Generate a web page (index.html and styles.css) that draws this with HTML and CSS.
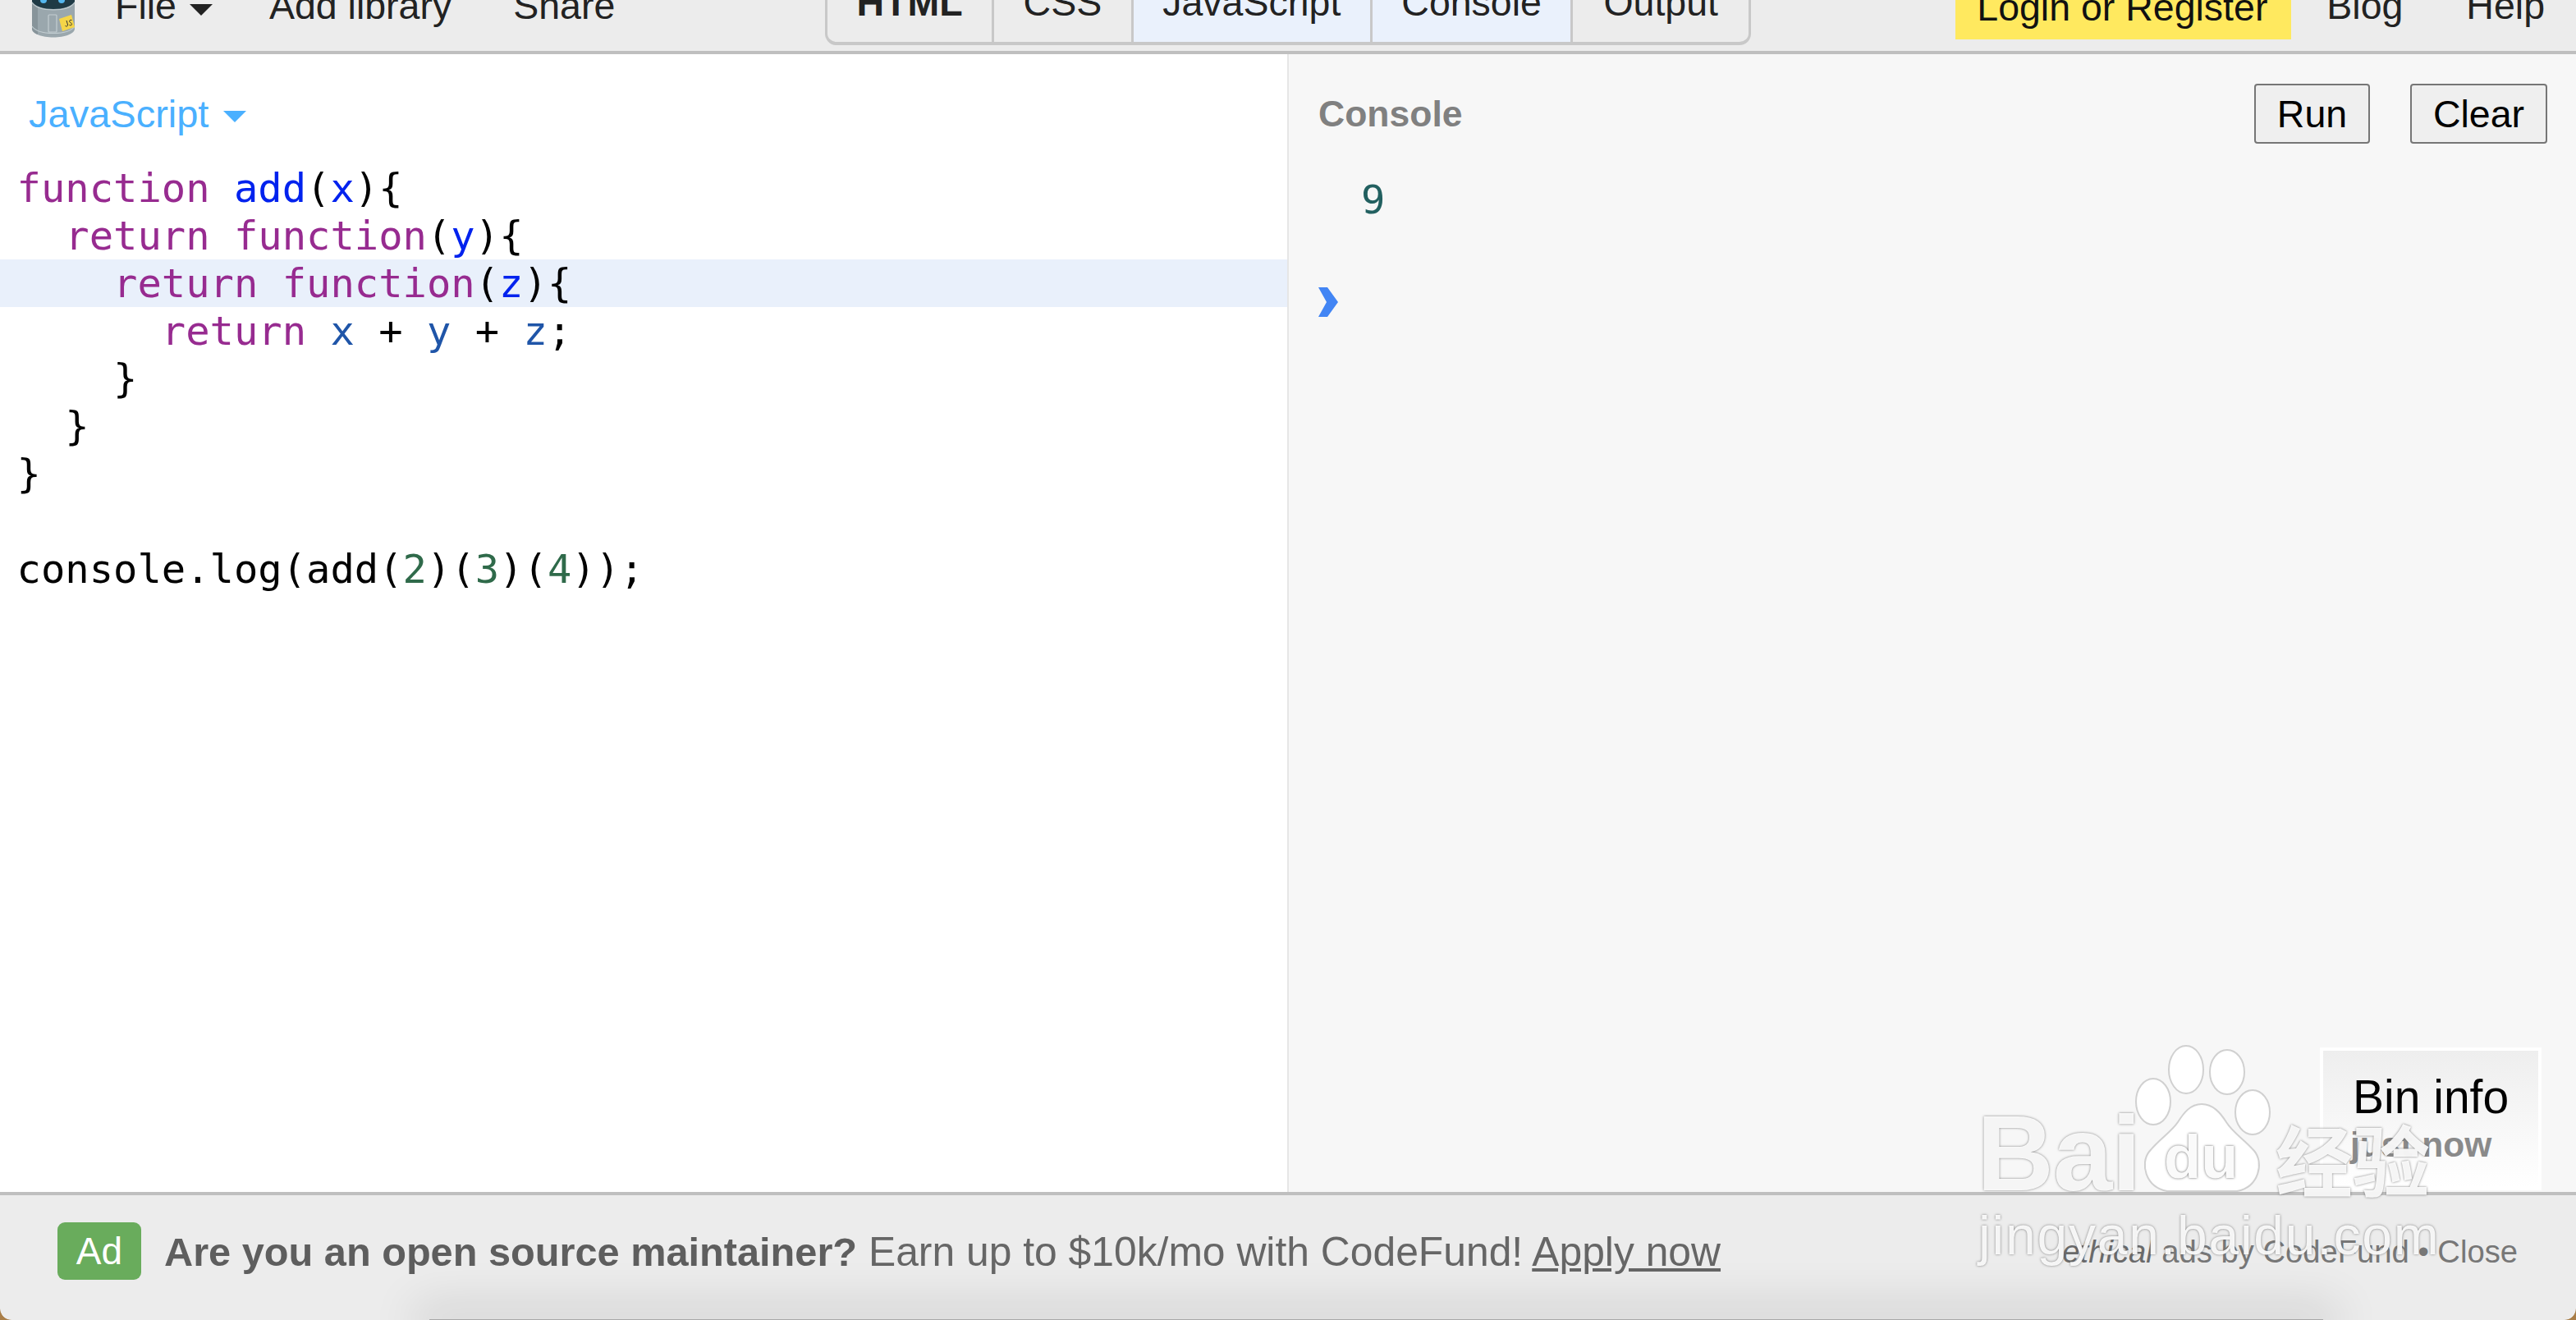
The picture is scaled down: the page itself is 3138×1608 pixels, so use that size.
FILE: index.html
```html
<!DOCTYPE html>
<html lang="en">
<head>
<meta charset="utf-8">
<title>JS Bin</title>
<link rel="stylesheet" href="styles.css">
</head>
<body>
<div class="app">
  <header class="topbar">
    <nav class="nav-left">
      <svg class="logo" viewBox="0 0 54 46" aria-hidden="true">
        <path d="M1 2V35C1 41 13 45.500 27 45.500S53 41 53 35V2Z" fill="#9aa7ad"/>
        <path d="M1 2V35C1 38 4 40.500 8 42V2Z" fill="#87949a"/>
        <path d="M1 32C5 38 15 40.500 27 40.500S49 38 53 32" fill="none" stroke="#c3ced2" stroke-width="1.200"/>
        <path d="M1 2C5 8 15 11 27 11S49 8 53 2V-6H1Z" fill="#1f3a45"/>
        <path d="M1 3C5 9 15 12 27 12S49 9 53 3" fill="none" stroke="#c3ced2" stroke-width="1.200"/>
        <circle cx="15" cy="0" r="4" fill="#55b7ee"/>
        <circle cx="37" cy="0" r="4" fill="#55b7ee"/>
        <rect x="21" y="18" width="10" height="21" rx="1" fill="none" stroke="#c3ced2" stroke-width="1.200"/>
        <path d="M34 23L49 18L53 33L38 38Z" fill="#f5d548"/>
        <path d="M43 25L44.500 30C44.800 32 43 32.500 41.500 31.500M49.500 24.500C47.500 24 46 25 46.800 26.500C47.500 28 49.500 28 49.500 29.500C49.500 31 47.500 31 46.500 30.500" fill="none" stroke="#333" stroke-width="1"/>
      </svg>
      <a class="nav-item nav-file">File<span class="caret"></span></a>
      <a class="nav-item">Add library</a>
      <a class="nav-item">Share</a>
    </nav>
    <div class="tabs">
      <a class="tab tab-html">HTML</a>
      <a class="tab">CSS</a>
      <a class="tab tab-on">JavaScript</a>
      <a class="tab tab-on">Console</a>
      <a class="tab">Output</a>
    </div>
    <nav class="nav-right">
      <a class="nav-item login">Login or Register</a>
      <a class="nav-item">Blog</a>
      <a class="nav-item">Help</a>
    </nav>
  </header>

  <main class="workspace">
    <section class="editor">
      <div class="editor-head">
        <span class="lang">JavaScript<span class="lang-caret"></span></span>
      </div>
      <div class="code">
        <div class="line"><span class="kw">function</span> <span class="def">add</span>(<span class="def">x</span>){</div>
        <div class="line">  <span class="kw">return</span> <span class="kw">function</span>(<span class="def">y</span>){</div>
        <div class="line line-active">    <span class="kw">return</span> <span class="kw">function</span>(<span class="def">z</span>){</div>
        <div class="line">      <span class="kw">return</span> <span class="var">x</span> + <span class="var">y</span> + <span class="var">z</span>;</div>
        <div class="line">    }</div>
        <div class="line">  }</div>
        <div class="line">}</div>
        <div class="line"> </div>
        <div class="line">console.log(add(<span class="num">2</span>)(<span class="num">3</span>)(<span class="num">4</span>));</div>
      </div>
    </section>
    <section class="console">
      <div class="console-head">
        <span class="console-title">Console</span>
        <div class="console-actions">
          <button class="btn btn-run">Run</button>
          <button class="btn btn-clear">Clear</button>
        </div>
      </div>
      <div class="console-output">9</div>
      <svg class="prompt" viewBox="0 0 24 36" aria-hidden="true"><path d="M0 0H11L24 18L11 36H0L10 18Z" fill="#4285f4"/></svg>
    </section>
    <aside class="bin-info">
      <div class="bin-title">Bin info</div>
      <div class="bin-time">just now</div>
    </aside>
  </main>

  <footer class="adbar">
    <span class="ad-badge">Ad</span>
    <p class="ad-text"><strong>Are you an open source maintainer?</strong> Earn up to $10k/mo with CodeFund! <a class="ad-link">Apply now</a></p>
    <p class="ad-credit"><em>ethical</em> ads by CodeFund • Close</p>
    <div class="ad-shadow"></div>
  </footer>

  <div class="watermark">
    <svg class="wm-paw" viewBox="0 0 180 180" aria-hidden="true">
      <g fill="#fff" fill-opacity=".9" stroke="#b4b4b4" stroke-opacity=".6" stroke-width="2">
        <ellipse cx="33" cy="72" rx="21" ry="28"/>
        <ellipse cx="73" cy="33" rx="21" ry="29"/>
        <ellipse cx="123" cy="36" rx="21" ry="27"/>
        <ellipse cx="154" cy="85" rx="21" ry="27"/>
        <path d="M92 75C78 75 70 86 63 97C55 109 41 117 28 133C17 147 23 176 50 181H135C162 176 168 146 156 132C144 118 130 110 122 97C115 86 106 75 92 75Z"/>
      </g>
    </svg>
    <span class="wm-bai">Bai</span>
    <span class="wm-du">du</span>
    <span class="wm-cn">经验</span>
    <span class="wm-url">jingyan.baidu.com</span>
  </div>
</div>
</body>
</html>
```

FILE: styles.css
```css
* { box-sizing: border-box; }
html, body { margin: 0; height: 100%; background: #a97e48; overflow: hidden; }
body { font-family: "Liberation Sans", Arial, sans-serif; color: #222; }
.app { position: relative; height: 1608px; display: flex; flex-direction: column; overflow: hidden; border-radius: 0 0 14px 14px; }

.topbar { height: 66px; flex: none; background: #ececec; border-bottom: 4px solid #bfbfbf; display: grid; grid-template-columns: 1fr auto 1fr; align-items: end; overflow: hidden; font-size: 46.500px; line-height: 52px; }
.nav-left { display: flex; align-items: flex-end; height: 62px; padding-left: 38px; }
.logo { width: 54px; height: 46px; margin-bottom: 16px; flex: none; overflow: visible; }
.nav-item { color: #222; white-space: nowrap; }
.nav-left .nav-item { margin-bottom: 29px; }
.nav-left .nav-file { margin-left: 48px; margin-right: 69px; display: flex; align-items: center; }
.nav-left .nav-item + .nav-item { margin-right: 75px; }
.caret { width: 0; height: 0; border-left: 14px solid transparent; border-right: 14px solid transparent; border-top: 14px solid #222; margin-left: 16px; margin-top: 10px; }

.tabs { display: flex; height: 62px; padding-bottom: 7px; }
.tab { padding: 0 35.500px 22px; display: flex; align-items: flex-end; border-right: 3px solid #c8c8c8; border-bottom: 4px solid #c8c8c8; color: #222; }
.tab:first-child { border-left: 3px solid #c8c8c8; border-bottom-left-radius: 14px; }
.tab:last-child { border-bottom-right-radius: 14px; padding-left: 37px; padding-right: 37px; }
.tab-html { font-weight: 700; }
.tab-on { background: #eaf1fc; }

.nav-right { display: flex; justify-content: flex-end; align-items: flex-end; height: 62px; padding-right: 38px; }
.nav-right .nav-item { margin-bottom: 29px; margin-left: 43px; }
.nav-right .nav-item:last-child { margin-left: 77px; }
.nav-right .login { background: #ffe95f; color: #111; height: 70px; width: 409px; padding: 5px 0 0 26px; margin: 0 0 14px 0; text-align: left; }

.workspace { position: relative; flex: 1; min-height: 0; display: flex; }
.editor { width: 1568px; flex: none; background: #fff; }
.editor-head { height: 134px; padding: 47px 0 0 35px; }
.lang { color: #4ab0ff; font-size: 47px; line-height: 52px; display: inline-flex; align-items: center; }
.lang-caret { width: 0; height: 0; border-left: 14px solid transparent; border-right: 14px solid transparent; border-top: 14px solid #4ab0ff; margin-left: 18px; margin-top: 6px; }
.code { font-family: "DejaVu Sans Mono", "Liberation Mono", monospace; font-size: 48.800px; line-height: 58px; color: #000; }
.line { white-space: pre; height: 58px; padding: 1px 0 0 20.500px; }
.line-active { background: #e9f0fb; }
.kw { color: #972b90; }
.def { color: #0022ee; }
.var { color: #1f55a8; }
.num { color: #2f6a4a; }

.console { flex: 1; background: #f7f7f7; border-left: 2px solid #e6e6e6; padding: 36px 35px 0 36px; }
.console-head { display: flex; justify-content: space-between; align-items: center; }
.console-title { font-size: 44.500px; font-weight: 700; color: #808080; }
.console-actions { display: flex; gap: 49px; }
.btn { font: 46.500px "Liberation Sans", Arial, sans-serif; color: #000; background: #efefef; border: 2px solid #767676; border-radius: 4px; height: 73px; padding: 0; }
.btn-run { width: 141px; }
.btn-clear { width: 167px; }
.console-output { font-family: "DejaVu Sans Mono", "Liberation Mono", monospace; font-size: 48.800px; line-height: 58px; color: #226060; margin: 40px 0 0 52px; }
.prompt { display: block; width: 24px; height: 36px; margin-top: 77px; }

.bin-info { position: absolute; right: 42px; bottom: 2px; width: 270px; height: 174px; border: 4px solid #fff; background: linear-gradient(#eeeeee, #ffffff); padding: 24px 0 0 36px; }
.bin-title { font-size: 57px; line-height: 64px; color: #000; }
.bin-time { font-size: 42.500px; line-height: 50px; font-weight: 700; color: #8a8a8a; margin-top: 2px; margin-left: -3px; }

.adbar { position: relative; height: 156px; flex: none; background: #ececec; border-top: 4px solid #bfbfbf; display: flex; align-items: center; padding: 0 71px 16px 70px; overflow: hidden; border-radius: 0 0 14px 14px; font-size: 49.800px; color: #666; }
.ad-badge { width: 102px; height: 70px; flex: none; background: #69ac5c; color: #fff; border-radius: 9px; font-size: 46px; line-height: 70px; text-align: center; margin-right: 28px; }
.ad-text { margin: 2px 0 0; flex: 1; white-space: nowrap; }
.ad-text strong { color: #5e5e5e; font-size: 48.700px; }
.ad-link { text-decoration: underline; }
.ad-credit { margin: 2px 0 0; font-size: 38.200px; white-space: nowrap; color: #777; }
.ad-credit em { color: #6a6a6a; }
.ad-shadow { position: absolute; left: 523px; right: 308px; bottom: -1px; height: 2px; background: #a8a8a8; box-shadow: 0 0 56px 18px rgba(0,0,0,.12); }

.watermark { position: absolute; left: 2400px; top: 1270px; width: 600px; height: 290px; pointer-events: none; }
.wm-paw { position: absolute; left: 190px; top: 0; width: 180px; height: 180px; overflow: visible; filter: blur(.6px); }
.wm-bai, .wm-du, .wm-cn, .wm-url { position: absolute; white-space: nowrap; color: rgba(255,255,255,.92); text-shadow: 0 0 3px rgba(90,90,90,.8); }
.wm-bai { left: 8px; top: 71px; font-size: 130px; line-height: 128px; font-weight: 700; letter-spacing: -1px; }
.wm-du { left: 236px; top: 95px; font-size: 74px; line-height: 90px; font-weight: 700; color: #fafafa; text-shadow: 0 0 3px rgba(70,70,70,.85); }
.wm-cn { left: 372px; top: 85px; font-family: "Noto Sans CJK SC", sans-serif; font-size: 94px; line-height: 110px; font-weight: 700; }
.wm-url { left: 10px; top: 197px; font-size: 66px; line-height: 76px; letter-spacing: 1.800px; }
```
